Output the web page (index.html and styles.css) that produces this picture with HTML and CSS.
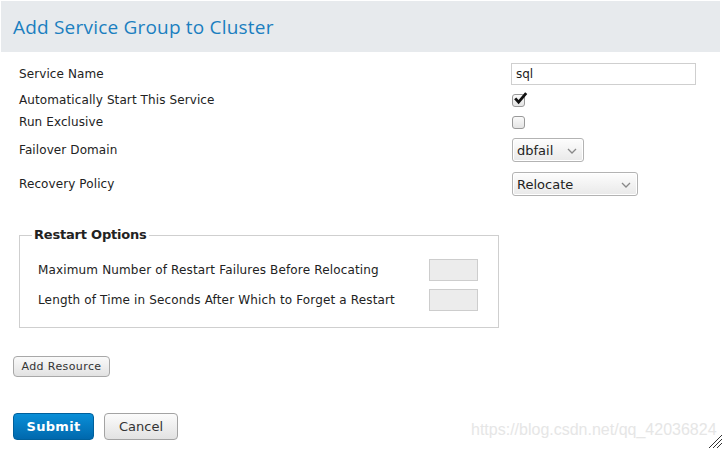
FILE: index.html
```html
<!DOCTYPE html>
<html>
<head>
<meta charset="utf-8">
<link rel="stylesheet" href="styles.css">
</head>
<body>
<div class="page">
  <div class="header"><h1 class="title">Add Service Group to Cluster</h1></div>
  <div class="form">
    <div class="row r1"><span class="label">Service Name</span><span class="ctl"><input class="text" type="text" value="sql"></span></div>
    <div class="row r2"><span class="label">Automatically Start This Service</span><span class="ctl"><span class="cb"><svg width="15" height="13" viewBox="0 0 15 13"><path d="M2.2 6.3 L5.6 10.2 L13.2 1.2" fill="none" stroke="#111" stroke-width="2.8"/></svg></span></span></div>
    <div class="row r3"><span class="label">Run Exclusive</span><span class="ctl"><span class="cb empty"></span></span></div>
    <div class="row r4"><span class="label">Failover Domain</span><span class="ctl"><span class="select s1"><span>dbfail</span><svg class="chev" width="10" height="6" viewBox="0 0 10 6"><path d="M1 1 L5 5 L9 1" fill="none" stroke="#888" stroke-width="1.3"/></svg></span></span></div>
    <div class="row r5"><span class="label">Recovery Policy</span><span class="ctl"><span class="select s2"><span>Relocate</span><svg class="chev" width="10" height="6" viewBox="0 0 10 6"><path d="M1 1 L5 5 L9 1" fill="none" stroke="#888" stroke-width="1.3"/></svg></span></span></div>
    <fieldset class="restart">
      <legend>Restart Options</legend>
      <div class="frow"><span class="flabel">Maximum Number of Restart Failures Before Relocating</span><span class="box"></span></div>
      <div class="frow"><span class="flabel">Length of Time in Seconds After Which to Forget a Restart</span><span class="box"></span></div>
    </fieldset>
  </div>
  <div class="addres"><button class="btn small">Add Resource</button></div>
  <div class="actions"><button class="btn primary">Submit</button><button class="btn cancel">Cancel</button></div>
  <div class="watermark">https://blog.csdn.net/qq_42036824</div>
  <svg class="grip" width="16" height="15" viewBox="0 0 16 15"><path d="M15 1 L2 14 M15 5 L6 14 M15 9 L10 14" stroke="#333" stroke-width="1"/></svg>
</div>
</body>
</html>
```

FILE: styles.css
```css
html, body { margin: 0; padding: 0; background: #fff; }
.page { position: relative; width: 724px; height: 449px; overflow: hidden; font-family: "DejaVu Sans", sans-serif; font-size: 12px; color: #222; }
.header { margin: 1px 4px 0 1px; height: 51px; background: #e7eaed; display: flex; align-items: center; padding-left: 12px; }
.title { margin: 0; font-family: "Open Sans", sans-serif; font-weight: 500; font-size: 19px; color: #1b7fc0; letter-spacing: 0.2px; padding-top: 1px; }
.form { padding-left: 19px; padding-top: 10px; }
.row { display: flex; align-items: center; }
.label { width: 492px; flex: none; letter-spacing: 0.1px; }
.r1 { height: 24px; }
.r2 { height: 28px; }
.r3 { height: 16px; }
.r4 { height: 40px; }
.r5 { height: 28px; }
.text { box-sizing: border-box; width: 185px; height: 22px; border: 1px solid #cfcfcf; font-family: "DejaVu Sans", sans-serif; font-size: 12px; padding: 0 4px; color: #222; margin: 0; outline: none; }
.cb { display: block; box-sizing: border-box; width: 13px; height: 13px; border: 1px solid #999; border-radius: 3px; background: linear-gradient(#fafafa, #e4e4e4); margin-left: 1px; position: relative; }
.cb svg { position: absolute; left: 0; top: -3px; }
.select { box-sizing: border-box; display: flex; align-items: center; justify-content: space-between; height: 24px; border: 1px solid #b3b3b3; border-radius: 3px; background: linear-gradient(#fdfdfd, #e9e9e9); margin-left: 1px; font-size: 13px; color: #222; padding: 0 6px 0 4px; box-shadow: inset 0 0 0 1px #fff; }
.s1 { width: 72px; }
.s2 { width: 126px; }
.chev { margin-top: 1px; }
.restart { box-sizing: border-box; width: 480px; margin: 29px 0 0 0; padding: 12px 20px 12px 18px; border: 1px solid #cfcfcf; }
.restart legend { font-weight: bold; font-size: 13px; padding: 0 2px; margin-left: -6px; line-height: 16px; color: #222; letter-spacing: -0.2px; }
.frow { display: flex; align-items: center; justify-content: space-between; height: 30px; }
.flabel { letter-spacing: 0.15px; }
.box { display: block; box-sizing: border-box; width: 49px; height: 22px; background: #ececec; border: 1px solid #cdcdcd; }
.addres { padding: 28px 0 0 13px; }
.btn { box-sizing: border-box; font-family: "DejaVu Sans", sans-serif; margin: 0; cursor: pointer; }
.small { height: 21px; width: 97px; font-size: 11px; color: #333; border: 1px solid #a8a8a8; border-radius: 4px; background: linear-gradient(#fafafa, #e2e2e2); padding: 0; letter-spacing: 0.4px; }
.actions { display: flex; gap: 10px; padding: 36px 0 0 13px; }
.primary { width: 81px; height: 27px; font-size: 13px; font-weight: bold; color: #fff; border: 1px solid #00609c; border-radius: 4px; background: linear-gradient(#0a8fd8, #0068ad); padding: 0; letter-spacing: 0.3px; }
.cancel { width: 74px; height: 27px; font-size: 13px; color: #333; border: 1px solid #a3a3a3; border-radius: 4px; background: linear-gradient(#fbfbfb, #e2e2e2); padding: 0; }
.watermark { position: absolute; left: 471px; top: 421px; font-family: "Liberation Sans", sans-serif; font-size: 16px; color: #e6e6e6; white-space: nowrap; }
.grip { position: absolute; left: 707px; top: 434px; }
```
